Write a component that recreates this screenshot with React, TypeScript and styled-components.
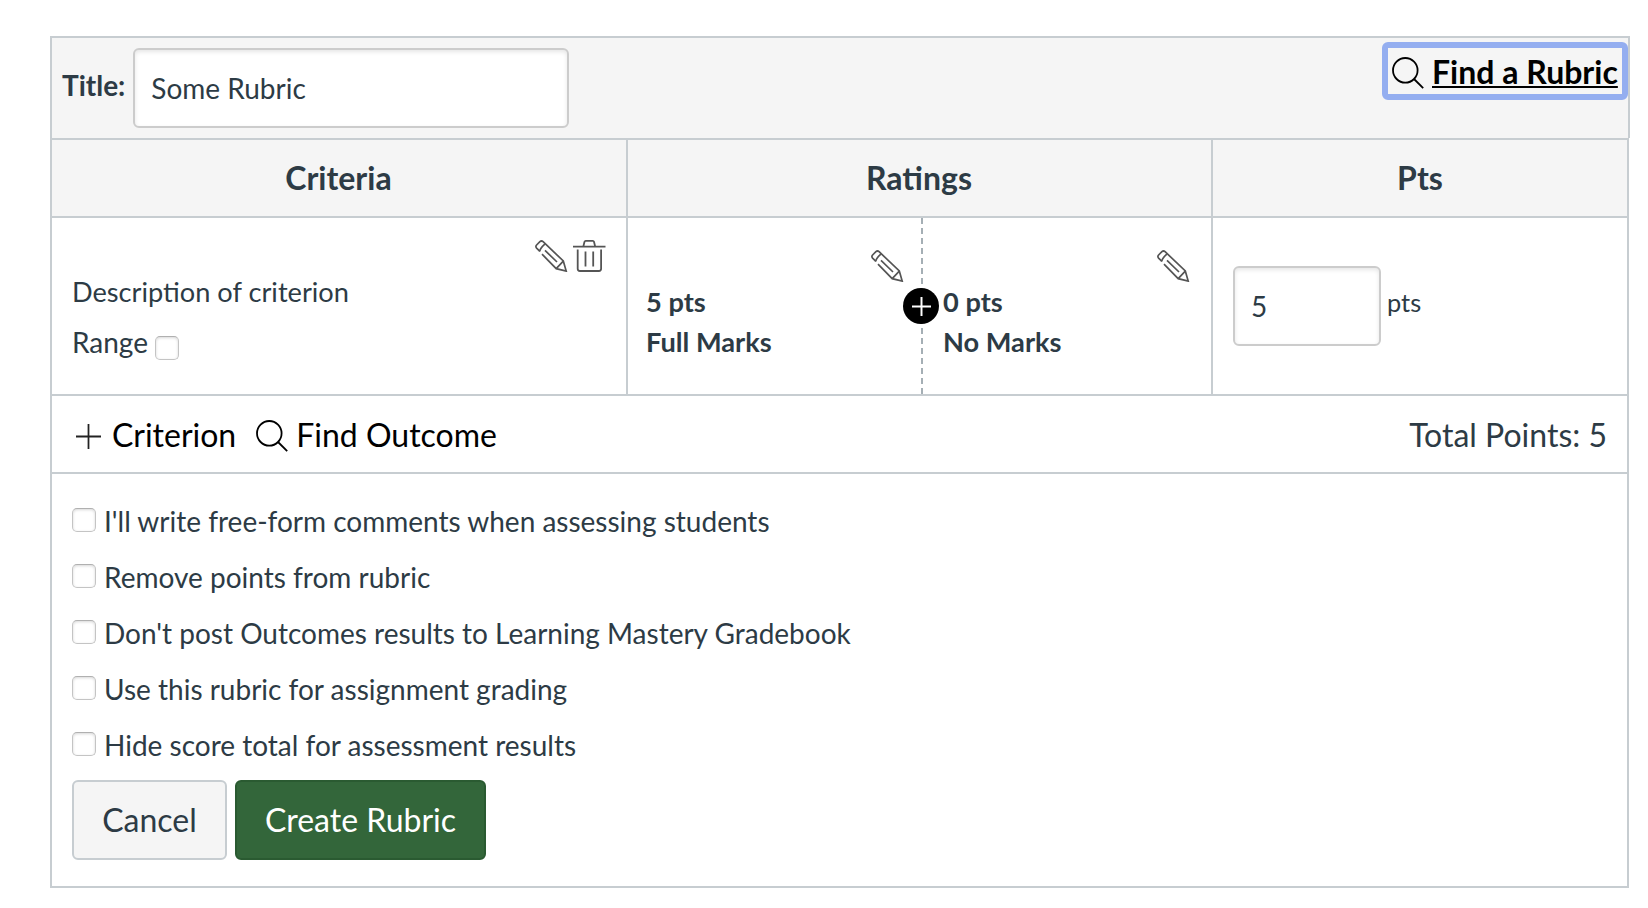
import React from "react";
import styled, { createGlobalStyle } from "styled-components";

const line = "#c7cdd1";
const ink = "#2d3b45";

const GlobalStyle = createGlobalStyle`
  * { box-sizing: border-box; }
  body { margin: 0; background: #fff; color: ${ink}; font: 28px/40px Lato, sans-serif; }
  input, button { font: inherit; color: inherit; }
`;

const Page = styled.main`padding: 36px 18px 20px 50px;`;
const Caption = styled.header`
  display: flex; justify-content: space-between; align-items: flex-start;
  height: 102px; padding: 4px 0 0 10px; background: #f5f5f5;
  border: 2px solid ${line}; border-bottom: 0;
`;
const TitleLabel = styled.label`
  display: flex; align-items: flex-start; padding-top: 6px; font-weight: 700;
  line-height: 74px;
`;
const TextInput = styled.input<{ $width: number }>`
  width: ${p => p.$width}px; height: 80px; padding: 0 16px; outline: 0;
  border: 2px solid #ccc; border-radius: 6px; background: #fff; font-weight: 400;
  box-shadow: inset 0 2px 4px rgba(0, 0, 0, 0.1);
`;
const TitleField = styled(TextInput)`margin-left: 8px;`;
const FindRubric = styled.a`
  display: flex; align-items: center; gap: 8px; width: 246px; height: 58px;
  padding: 2px 0 0 4px; border: 6px solid #94aef0; border-radius: 6px;
  color: #000; font-size: 32px; font-weight: 700; white-space: nowrap;
  svg { margin-top: 2px; }
  span { text-decoration: underline; text-decoration-thickness: 2px; text-underline-offset: 2px; }
`;
const Table = styled.section`
  width: 1579px; border: 2px solid ${line};
`;
const Row = styled.div<{ $height: number; $head?: boolean }>`
  display: grid; grid-template-columns: 576px 585px 1fr; height: ${p => p.$height}px;
  border-bottom: 2px solid ${line}; background: ${p => (p.$head ? "#f5f5f5" : "#fff")};
`;
const HeadCell = styled.h2`
  margin: 0; font-size: 32px; font-weight: 700; line-height: 76px; text-align: center;
  &:not(:last-child) { padding-right: 1px; border-right: 2px solid ${line}; }
`;
const Cell = styled.div`
  &:not(:last-child) { border-right: 2px solid ${line}; }
`;
const CriterionCell = styled(Cell)`padding: 22px 20px 0;`;
const Tools = styled.div`
  display: flex; justify-content: flex-end; gap: 5px; height: 32px;
`;
const Description = styled.div`font-size: 27.2px; line-height: 39px;`;
const RangeLabel = styled.label`
  display: flex; align-items: flex-start; gap: 7px; margin-top: 11px;
  input { margin-top: 14px; }
`;
const Checkbox = styled.input.attrs({ type: "checkbox" })`
  appearance: none; flex: none; width: 24px; height: 24px; margin: 0;
  border: 1px solid #c4c4c4; border-top-color: #b0b0b0; border-radius: 5px; background: #fff;
  box-shadow: inset 0 1px 3px rgba(0, 0, 0, 0.16);
`;
const RatingsCell = styled(Cell)`display: grid; grid-template-columns: 293px 1fr;`;
const Rating = styled.div`
  position: relative; padding: 32px 17px 0 18px; font-size: 27.2px; font-weight: 700;
  & + & { border-left: 2px dashed #a5afb5; padding: 32px 21px 0 20px; }
`;
const AddRating = styled.button`
  position: absolute; left: -20px; top: 70px; width: 36px; height: 36px; padding: 0;
  display: grid; place-items: center; border: 0; border-radius: 50%; background: #000;
`;
const PointsCell = styled(Cell)`display: flex; gap: 6px; padding: 48px 20px 0;`;
const PointsUnit = styled.span`font-size: 25.4px; line-height: 72px;`;
const Summary = styled.div`
  display: flex; align-items: center; height: 78px; padding: 1px 20px 0 24px;
  border-bottom: 2px solid ${line}; font-size: 32px;
`;
const Action = styled.a<{ $gap: number }>`
  display: flex; align-items: center; gap: ${p => p.$gap}px; margin-right: 20px; color: #000;
  svg { margin-top: 3px; }
`;
const Total = styled.div`margin-left: auto;`;
const Options = styled.div`height: 412px; padding: 20px 20px 0;`;
const Option = styled.label`
  display: flex; align-items: flex-start; gap: 8px; height: 56px; line-height: 54px;
  input { margin-top: 14px; }
`;
const Buttons = styled.div`display: flex; gap: 8px; padding-top: 6px;`;
const Button = styled.button<{ $primary?: boolean; $width: number }>`
  width: ${p => p.$width}px; height: 80px; padding: 0; border-radius: 6px; font-size: 32px;
  border: 2px solid ${p => (p.$primary ? "#2a5a31" : line)};
  background: ${p => (p.$primary ? "#33663a" : "#f5f5f5")};
  color: ${p => (p.$primary ? "#fff" : ink)};
`;

const Search = () => (
  <svg width="32" height="32" viewBox="0 0 32 32" fill="none" stroke="#000" strokeWidth="1.8">
    <circle cx="13.3" cy="13.3" r="12.3" /><path d="M22 22l9.2 9.2" />
  </svg>
);
const Pencil = () => (
  <svg width="33" height="32" viewBox="0 0 33 32" fill="none" stroke="#555" strokeWidth="1.7">
    <path d="M4.9 11.4L1.6 8.1Q.2 6.5 1.6 5L4.9 1.7Q6.5.3 8.1 1.7L28.3 21 31.2 31.1 21.2 28.7 7 14.1" />
    <path d="M4.7 11.3Q5 8.5 10 3.9M21.2 28.7l7.1-7.5M10 10.4L22 22" />
  </svg>
);
const Trash = () => (
  <svg width="33" height="32" viewBox="0 0 33 32" fill="none" stroke="#555" strokeWidth="1.8">
    <path d="M0 6.6h32.5M10.3 6.6l1.2-4.8q.3-.9 1.2-.9h7.1q.9 0 1.2.9l1.2 4.8M4.7 9.5v19.3q0 2.2 2.2 2.2h19q2.2 0 2.2-2.2V9.5M12.5 11.5v15M20.2 11.5v15" />
  </svg>
);
const Plus = ({ size, color }: { size: number; color: string }) => (
  <svg width={size} height={size} viewBox="0 0 24 24" stroke={color} strokeWidth={size > 20 ? 1.7 : 2.5}>
    <path d="M12 0v24M0 12h24" />
  </svg>
);

const options = [
  "I'll write free-form comments when assessing students",
  "Remove points from rubric",
  "Don't post Outcomes results to Learning Mastery Gradebook",
  "Use this rubric for assignment grading",
  "Hide score total for assessment results",
];

export default function App() {
  return (
    <Page>
      <GlobalStyle />
      <Caption>
        <TitleLabel>Title:<TitleField $width={436} defaultValue="Some Rubric" /></TitleLabel>
        <FindRubric><Search /><span>Find a Rubric</span></FindRubric>
      </Caption>
      <Table>
        <Row $height={78} $head>
          <HeadCell>Criteria</HeadCell><HeadCell>Ratings</HeadCell><HeadCell>Pts</HeadCell>
        </Row>
        <Row $height={178}>
          <CriterionCell>
            <Tools><Pencil /><Trash /></Tools>
            <Description>Description of criterion</Description>
            <RangeLabel>Range<Checkbox /></RangeLabel>
          </CriterionCell>
          <RatingsCell>
            <Rating><Tools><Pencil /></Tools>5 pts<br />Full Marks</Rating>
            <Rating>
              <Tools><Pencil /></Tools>0 pts<br />No Marks
              <AddRating aria-label="Add rating"><Plus size={19} color="#fff" /></AddRating>
            </Rating>
          </RatingsCell>
          <PointsCell>
            <TextInput $width={148} defaultValue="5" />
            <PointsUnit>pts</PointsUnit>
          </PointsCell>
        </Row>
        <Summary>
          <Action $gap={11}><Plus size={25} color="#222" />Criterion</Action>
          <Action $gap={8}><Search />Find Outcome</Action>
          <Total>Total Points: 5</Total>
        </Summary>
        <Options>
          {options.map(text => <Option key={text}><Checkbox />{text}</Option>)}
          <Buttons>
            <Button $width={155}>Cancel</Button>
            <Button $width={251} $primary>Create Rubric</Button>
          </Buttons>
        </Options>
      </Table>
    </Page>
  );
}
